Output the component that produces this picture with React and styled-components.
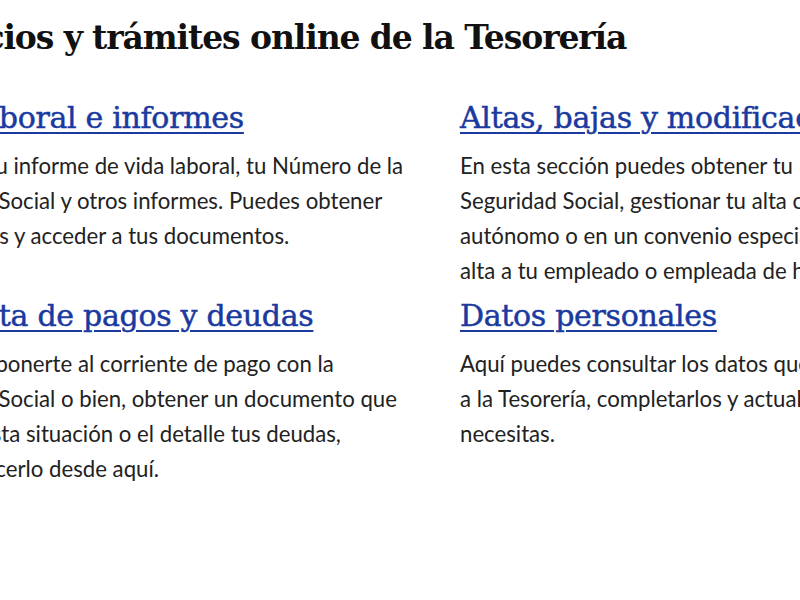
import React from "react";
import styled, { createGlobalStyle } from "styled-components";

const Global = createGlobalStyle`
  html, body { margin: 0; padding: 0; background: #fff; }
  body { overflow: hidden; }
`;

const Viewport = styled.div`
  width: 800px;
  height: 600px;
  overflow: hidden;
  background: #fff;
`;

const Page = styled.main`
  margin-left: -104px;
  padding-top: 16px;
  width: 1200px;
`;

const Title = styled.h1`
  margin: 0 0 38px 0;
  font-family: "DejaVu Serif", "Liberation Serif", serif;
  font-weight: 700;
  font-size: 33px;
  letter-spacing: -1.1px;
  line-height: 44px;
  color: #111;
  white-space: nowrap;
`;

const Grid = styled.div`
  display: grid;
  grid-template-columns: 514px 560px;
  column-gap: 50px;
  row-gap: 8px;
`;

const Card = styled.section`
  display: flex;
  flex-direction: column;
`;

const CardLink = styled.a`
  display: block;
  margin: 0 0 10px 0;
  font-family: "DejaVu Serif", "Liberation Serif", serif;
  font-weight: 400;
  font-size: 30px;
  letter-spacing: -0.3px;
  line-height: 40px;
  color: #1a3aa0;
  -webkit-text-stroke: 0.5px #1a3aa0;
  text-decoration: underline;
  text-decoration-thickness: 2px;
  text-underline-offset: 4px;
  white-space: nowrap;
`;

const Text = styled.p`
  margin: 0;
  font-family: Lato, "Open Sans", sans-serif;
  font-size: 22.2px;
  line-height: 35px;
  color: #222;
`;

const Line = styled.span`
  display: block;
  white-space: nowrap;
`;

const cards = [
  {
    title: "Vida laboral e informes",
    lines: [
      "Consulta tu informe de vida laboral, tu Número de la",
      "Seguridad Social y otros informes. Puedes obtener",
      "certificados y acceder a tus documentos.",
    ],
  },
  {
    title: "Altas, bajas y modificaciones",
    lines: [
      "En esta sección puedes obtener tu Número de la",
      "Seguridad Social, gestionar tu alta como",
      "autónomo o en un convenio especial o dar de",
      "alta a tu empleado o empleada de hogar.",
    ],
  },
  {
    title: "Consulta de pagos y deudas",
    lines: [
      "Si quieres ponerte al corriente de pago con la",
      "Seguridad Social o bien, obtener un documento que",
      "acredite esta situación o el detalle tus deudas,",
      "puedes hacerlo desde aquí.",
    ],
  },
  {
    title: "Datos personales",
    lines: [
      "Aquí puedes consultar los datos que has facilitado",
      "a la Tesorería, completarlos y actualizarlos si lo",
      "necesitas.",
    ],
  },
];

export default function App() {
  return (
    <Viewport>
      <Global />
      <Page>
        <Title>Servicios y trámites online de la Tesorería</Title>
        <Grid>
          {cards.map((c) => (
            <Card key={c.title}>
              <CardLink href="#">{c.title}</CardLink>
              <Text>
                {c.lines.map((l) => (
                  <Line key={l}>{l}</Line>
                ))}
              </Text>
            </Card>
          ))}
        </Grid>
      </Page>
    </Viewport>
  );
}
